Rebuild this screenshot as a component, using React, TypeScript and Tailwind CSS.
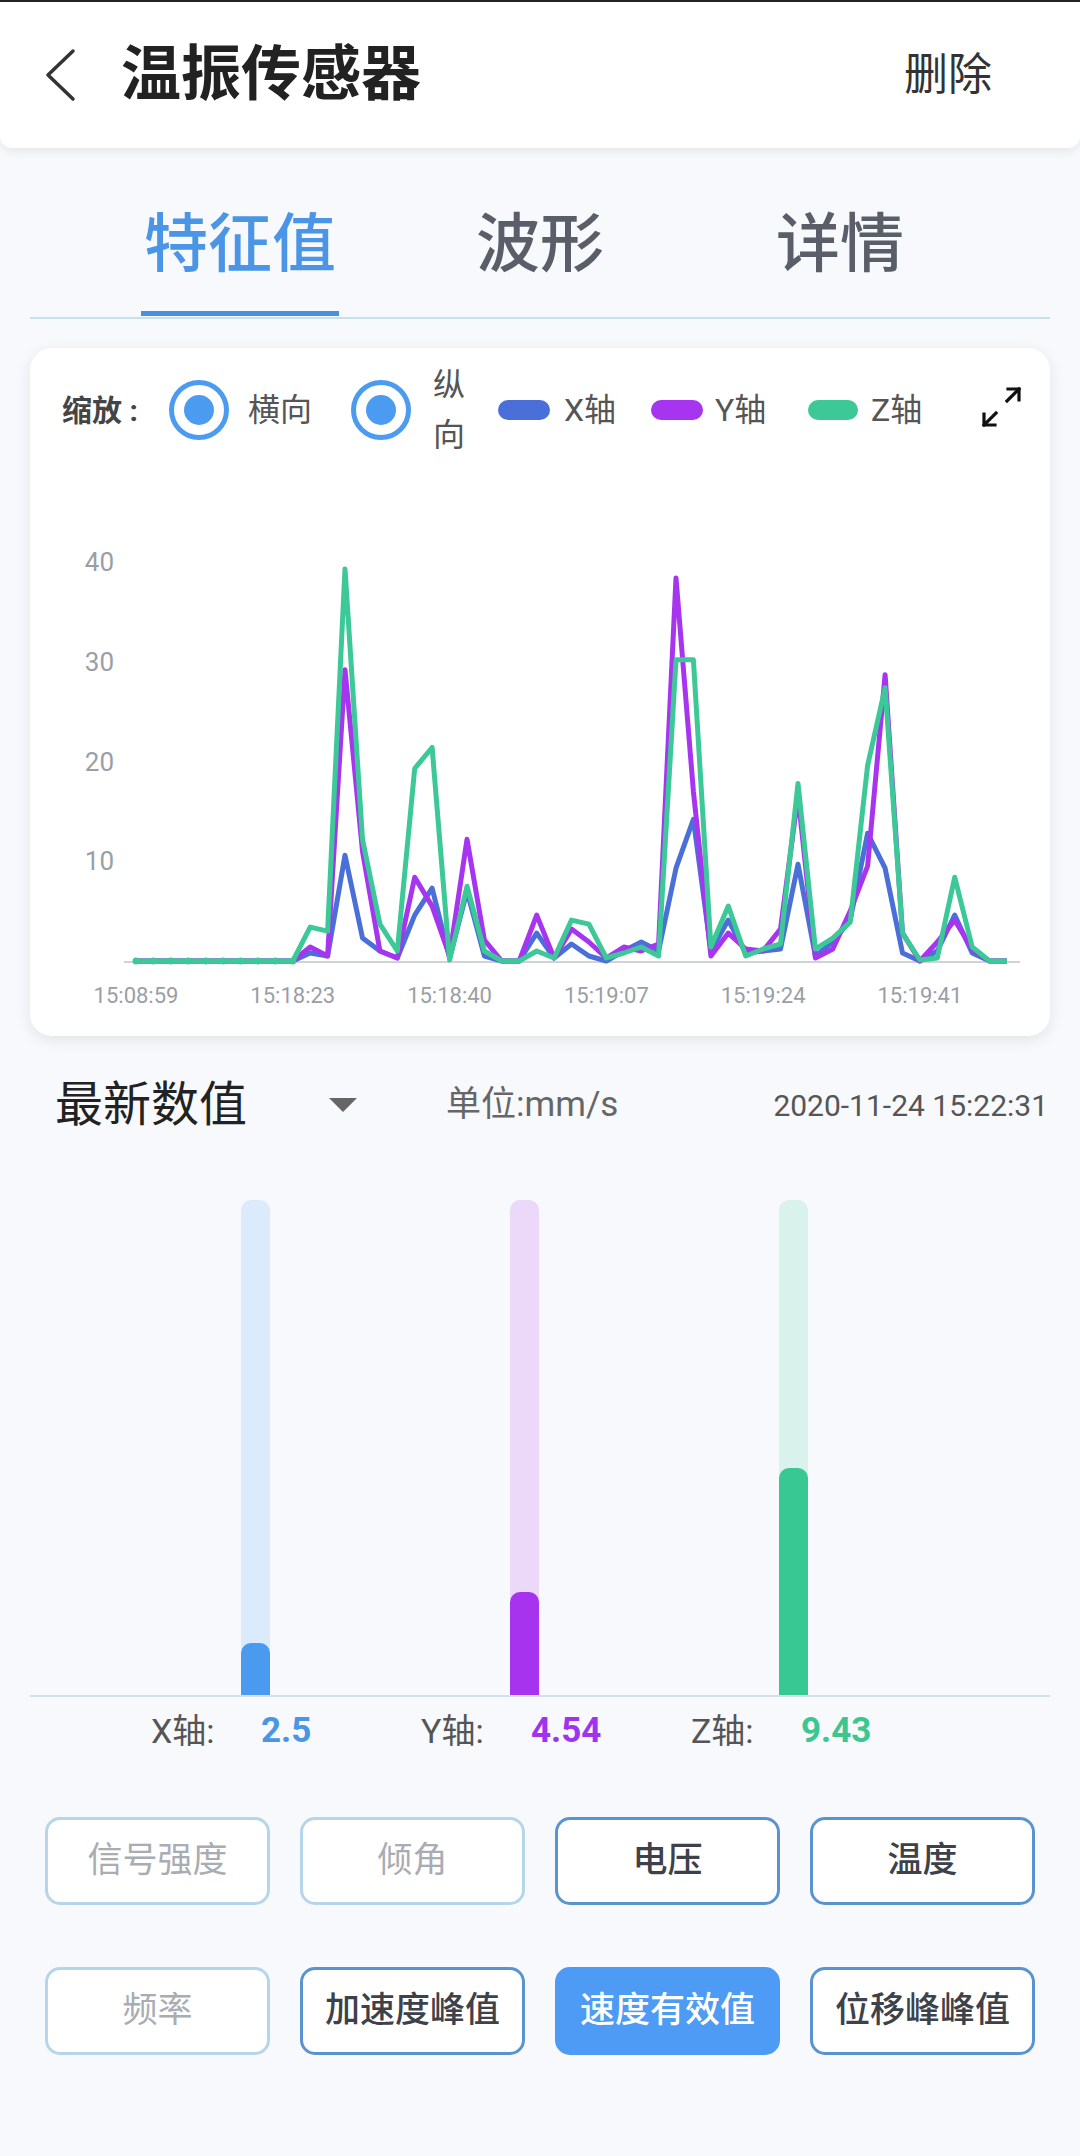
import React from 'react';

const xs = [0, 0, 0, 0, 0, 0, 0, 0, 0, 0, 0.8, 0.5, 10.6, 2.3, 1, 0.3, 4.6, 7.3, 0.3, 7, 0.5, 0, 0, 2.8, 0.3, 1.7, 0.5, 0, 1, 1.9, 1, 9.3, 14.2, 1, 4.1, 0.8, 1, 1.2, 9.7, 0.5, 1.9, 4.1, 12.8, 9.3, 0.8, 0, 1, 4.6, 0.8, 0, 0];
const ys = [0, 0, 0, 0, 0, 0, 0, 0, 0, 0, 1.4, 0.5, 29.2, 11, 1, 0.3, 8.4, 5.5, 0.5, 12.2, 2.1, 0, 0, 4.6, 0.3, 3.2, 1.9, 0.3, 1.4, 1, 1.7, 38.4, 17, 0.5, 2.8, 1.2, 1, 3.2, 16.6, 0.3, 1.2, 5, 9.5, 28.7, 2.8, 0, 1.9, 4.1, 1.2, 0, 0];
const zs = [0, 0, 0, 0, 0, 0, 0, 0, 0, 0, 3.4, 3.0, 39.3, 12.2, 3.7, 1, 19.3, 21.4, 0.1, 7.5, 1, 0, 0, 1, 0.3, 4.1, 3.7, 0.3, 0.8, 1.4, 0.5, 30.2, 30.2, 1.4, 5.5, 0.5, 1.2, 1.7, 17.8, 1.2, 2.3, 3.9, 19.6, 27.4, 2.8, 0.1, 0.3, 8.4, 1.4, 0, 0];

const times = ['15:08:59', '15:18:23', '15:18:40', '15:19:07', '15:19:24', '15:19:41'];

const px = (i: number) => 106 + i * 17.42;
const py = (v: number) => 493 - v * 9.975;
const toPoints = (arr: number[]) => arr.map((v, i) => `${px(i).toFixed(1)},${py(v).toFixed(1)}`).join(' ');

function Radio() {
  return (
    <div className="w-[60px] h-[60px] shrink-0 rounded-full border-[5px] border-[#4b9bf0] flex items-center justify-center">
      <div className="w-[30px] h-[30px] rounded-full bg-[#4b9bf0]" />
    </div>
  );
}

function Btn({ label, kind }: { label: string; kind: 'off' | 'on' | 'active' }) {
  const cls =
    kind === 'active'
      ? 'bg-[#4d9bf4] border-[#4d9bf4] text-white font-medium'
      : kind === 'on'
        ? 'bg-white border-[#5a94d0] text-[#3d4149] font-medium'
        : 'bg-white border-[#b5d5ea] text-[#a9adb3]';
  return (
    <div className={`h-[88px] rounded-[15px] border-[3px] flex items-center justify-center text-[35px] ${cls}`}>
      {label}
    </div>
  );
}

export default function App() {
  return (
    <div className="w-[1080px] min-h-[2156px] bg-[#f7f9fc] font-['Roboto','Noto_Sans_CJK_SC',sans-serif]">
      {/* header */}
      <div className="h-[148px] bg-white border-t-2 border-[#222] rounded-b-xl shadow-[0_4px_10px_rgba(0,0,0,0.07)] flex items-center">
        <svg width="40" height="56" viewBox="0 0 40 56" className="ml-[42px] shrink-0">
          <polyline points="31,4 6,28 31,52" fill="none" stroke="#333" strokeWidth="3.5" strokeLinecap="round" strokeLinejoin="round" />
        </svg>
        <div className="ml-[39px] text-[60px] font-bold text-[#222] leading-none">温振传感器</div>
        <div className="ml-auto mr-[88px] text-[44px] text-[#333] leading-none">删除</div>
      </div>

      {/* tabs */}
      <div className="mx-[30px] h-[171px] border-b-2 border-[#c5e2ee] flex pl-[60px]">
        {['特征值', '波形', '详情'].map((t, i) => (
          <div key={t} className="w-[300px] flex flex-col items-center">
            <div className={`mt-[60px] h-[74px] leading-[74px] text-[64px] font-medium ${i === 0 ? 'text-[#4a95e6]' : 'text-[#595e68]'}`}>
              {t}
            </div>
            {i === 0 && <div className="mt-[29px] h-[5px] w-[198px] bg-[#4a8fe0]" />}
          </div>
        ))}
      </div>

      {/* chart card */}
      <div className="mx-[30px] mt-[29px] h-[688px] rounded-[22px] bg-white shadow-[0_4px_16px_rgba(0,0,0,0.09)] flex flex-col">
        <div className="flex items-center pl-[32px] pr-[25px] pt-[32px] h-[92px]">
          <div className="w-[107px] shrink-0 text-[30px] font-bold text-[#444]">缩放 :</div>
          <Radio />
          <div className="ml-[19px] w-[103px] shrink-0 text-[32px] text-[#555]">横向</div>
          <Radio />
          <div className="ml-[22px] w-[65px] shrink-0 text-[32px] leading-[50px] text-[#555]">
            纵<br />向
          </div>
          <div className="w-[52px] h-[20px] rounded-full bg-[#4a6fd8] shrink-0" />
          <div className="ml-[14px] w-[87px] shrink-0 text-[32px] text-[#555]">X轴</div>
          <div className="w-[52px] h-[20px] rounded-full bg-[#a735f0] shrink-0" />
          <div className="ml-[12px] w-[93px] shrink-0 text-[32px] text-[#555]">Y轴</div>
          <div className="w-[50px] h-[20px] rounded-full bg-[#3cc897] shrink-0" />
          <div className="ml-[13px] shrink-0 text-[32px] text-[#555]">Z轴</div>
          <svg width="46" height="46" viewBox="0 0 46 46" className="ml-auto shrink-0 -mt-[6px]">
            <g fill="none" stroke="#111" strokeWidth="3.2" strokeLinecap="square">
              <path d="M28 17 L40 5" />
              <path d="M29 5 H40 V16" />
              <path d="M17 29 L5 41" />
              <path d="M5 30 V41 H16" />
            </g>
          </svg>
        </div>
        <svg width="1020" height="568" viewBox="0 0 1020 568" className="mt-[28px]">
          {[10, 20, 30, 40].map((v) => (
            <text key={v} x="84" y={py(v) + 9} textAnchor="end" fontSize="26" fill="#9a9ea5" fontFamily="Roboto, sans-serif">
              {v}
            </text>
          ))}
          <line x1="94" y1="494" x2="990" y2="494" stroke="#cfd2d6" strokeWidth="2" />
          {times.map((t, k) => (
            <text key={t} x={px(k * 9)} y="535" textAnchor="middle" fontSize="22" fill="#9a9ea5" fontFamily="Roboto, sans-serif">
              {t}
            </text>
          ))}
          <polyline points={toPoints(xs)} fill="none" stroke="#4a6fd8" strokeWidth="5" strokeLinejoin="round" />
          <polyline points={toPoints(ys)} fill="none" stroke="#a735f0" strokeWidth="5" strokeLinejoin="round" />
          <polyline points={toPoints(zs)} fill="none" stroke="#3cc897" strokeWidth="5" strokeLinejoin="round" />
          {Array.from({ length: 10 }).map((_, i) => (
            <circle key={i} cx={px(i)} cy={py(0)} r="3.5" fill="#3cc897" />
          ))}
        </svg>
      </div>

      {/* latest values header */}
      <div className="mt-[34px] h-[70px] flex items-center pl-[55px] pr-[32px]">
        <div className="text-[48px] text-[#222]">最新数值</div>
        <svg width="28" height="14" viewBox="0 0 28 14" className="ml-[82px]">
          <polygon points="0,0 28,0 14,14" fill="#666" />
        </svg>
        <div className="ml-[89px] text-[35px] text-[#666]">单位:mm/s</div>
        <div className="ml-auto text-[30px] text-[#555]">2020-11-24 15:22:31</div>
      </div>

      {/* bars */}
      <div className="mx-[30px] mt-[60px] h-[497px] border-b-2 border-[#d3e1ea] flex items-end pl-[211px] gap-[240px]">
        {[
          { track: 'bg-[#dcebfb]', fill: 'bg-[#4a9af0]', h: 52 },
          { track: 'bg-[#ecd9fa]', fill: 'bg-[#a733ef]', h: 103 },
          { track: 'bg-[#d9f3ec]', fill: 'bg-[#38c894]', h: 227 },
        ].map((b, i) => (
          <div key={i} className={`w-[29px] h-[495px] rounded-t-[10px] flex flex-col justify-end ${b.track}`}>
            <div className={`w-full rounded-t-[10px] ${b.fill}`} style={{ height: b.h }} />
          </div>
        ))}
      </div>

      {/* value labels */}
      <div className="h-[68px] flex items-center pl-[151px]">
        {[
          { l: 'X轴:', v: '2.5', c: 'text-[#4a95e6]' },
          { l: 'Y轴:', v: '4.54', c: 'text-[#a033ee]' },
          { l: 'Z轴:', v: '9.43', c: 'text-[#3cc690]' },
        ].map((it) => (
          <div key={it.l} className="w-[270px] flex items-center">
            <div className="w-[110px] text-[34px] text-[#555]">{it.l}</div>
            <div className={`text-[35px] font-bold ${it.c}`}>{it.v}</div>
          </div>
        ))}
      </div>

      {/* buttons */}
      <div className="mt-[52px] px-[45px] grid grid-cols-4 gap-x-[30px] gap-y-[62px]">
        <Btn label="信号强度" kind="off" />
        <Btn label="倾角" kind="off" />
        <Btn label="电压" kind="on" />
        <Btn label="温度" kind="on" />
        <Btn label="频率" kind="off" />
        <Btn label="加速度峰值" kind="on" />
        <Btn label="速度有效值" kind="active" />
        <Btn label="位移峰峰值" kind="on" />
      </div>
    </div>
  );
}
